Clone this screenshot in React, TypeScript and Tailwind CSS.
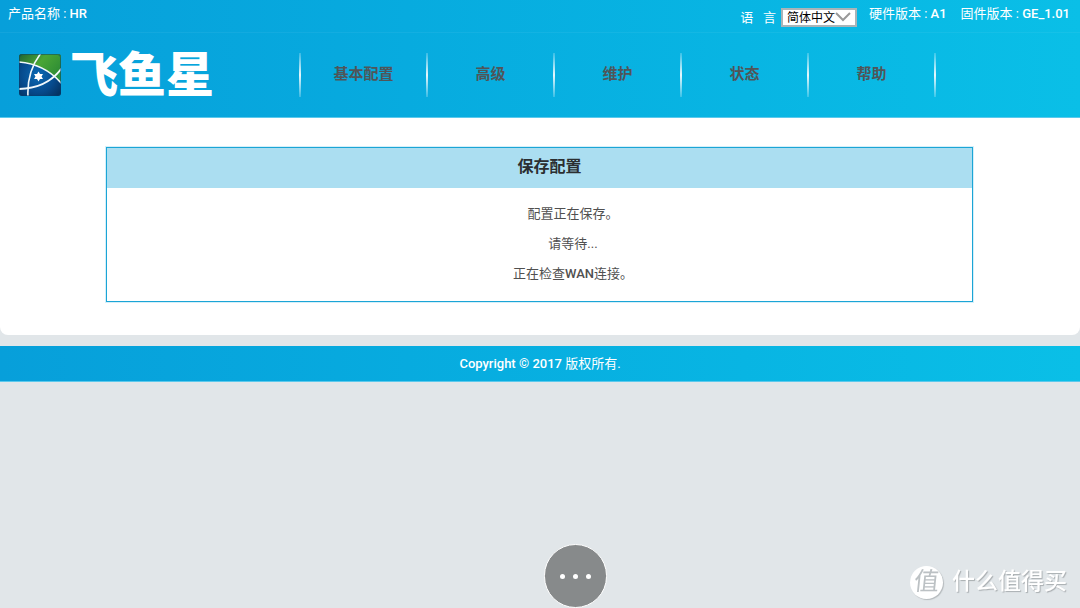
import { useState } from "react";

const menus = ["基本配置", "高级", "维护", "状态", "帮助"];

const Logo = () => {
  return (
    <a href="#home" className="flex items-center gap-2 pl-[18px] w-[299px] shrink-0">
      <svg viewBox="0 0 44 44" className="w-11 h-11 shrink-0" aria-hidden="true">
        <defs>
          <clipPath id="logoClip">
            <rect x="1" y="1" width="42" height="42" rx="3" />
          </clipPath>
          <linearGradient id="logoGreen" x1="0" y1="0" x2="1" y2="0.6">
            <stop offset="0" stopColor="#1c5f33" />
            <stop offset="0.5" stopColor="#4aa636" />
            <stop offset="1" stopColor="#2b8a35" />
          </linearGradient>
          <radialGradient id="logoBlue" cx="0.45" cy="0.5" r="0.65">
            <stop offset="0" stopColor="#0b6ab5" />
            <stop offset="0.6" stopColor="#064a8c" />
            <stop offset="1" stopColor="#05315f" />
          </radialGradient>
        </defs>
        <g clipPath="url(#logoClip)">
          <rect width="44" height="44" fill="url(#logoBlue)" />
          <path d="M0 9 C16 10 32 17 44 31 V0 H0 Z" fill="url(#logoGreen)" />
          <path d="M36 23 L44 15 V31 Z" fill="#2f9440" />
          <g fill="none" stroke="#f1f8fb">
            <path d="M0 9 C16 10 32 17 44 31" strokeWidth="1.6" />
            <path d="M0 36 C18 36 33 30 44 15" strokeWidth="1.8" />
            <path d="M23 0 C13 13 9 27 10 44" strokeWidth="1.6" />
          </g>
          <path
            d="M20.5 18.5 L22 21 L25 21 L23.5 23.5 L25 26 L22 26 L20.5 28.5 L19 26 L16 26 L17.5 23.5 L16 21 L19 21 Z"
            fill="#fff"
          />
        </g>
        <rect x="1.5" y="1.5" width="41" height="41" rx="3" fill="none" stroke="#06406d" strokeOpacity="0.5" />
      </svg>
      <span className="pt-0.5 text-[48px] leading-[44px] font-black text-white whitespace-nowrap">飞鱼星</span>
    </a>
  );
};

const Divider = () => {
  return <span className="w-0.5 h-11 shrink-0 bg-linear-to-b from-white/20 via-white/90 to-white/20" />;
};

const Header = () => {
  const [language, setLanguage] = useState("zh");

  return (
    <header className="bg-linear-to-r from-[#079fda] to-[#0abfe7] border-b border-[#5cc9ec]">
      <div className="flex justify-between h-8 pl-2 pr-[10px] text-[13px] leading-7 text-white whitespace-nowrap">
        <p>
          产品名称 : <span className="font-medium">HR</span>
        </p>
        <div className="flex">
          <label htmlFor="language" className="leading-9 whitespace-pre">
            语&nbsp;&nbsp; 言
          </label>
          <div className="relative ml-[5px] mt-2 h-[19px]">
            <select
              id="language"
              value={language}
              onChange={(e) => setLanguage(e.target.value)}
              className="appearance-none block w-[76px] h-[19px] pl-1 border-2 border-[#a9b4b8] bg-white text-xs leading-4 text-black"
            >
              <option value="zh">简体中文</option>
              <option value="en">English</option>
            </select>
            <svg viewBox="0 0 16 10" className="absolute right-1.5 top-1 w-4 h-[10px] pointer-events-none" aria-hidden="true">
              <path d="M1 1 L8 8 L15 1" fill="none" stroke="#999" strokeWidth="2" />
            </svg>
          </div>
          <p className="ml-3">
            硬件版本 : <span className="font-medium">A1</span>
          </p>
          <p className="ml-[14px]">
            固件版本 : <span className="font-medium">GE_1.01</span>
          </p>
        </div>
      </div>

      <div className="flex items-center h-[85px] border-t border-white/5">
        <Logo />
        <nav className="flex items-center">
          <Divider />
          {menus.map((menu) => (
            <div key={menu} className="flex items-center">
              <button type="button" className="w-[125px] pb-0.5 text-[15px] leading-6 font-bold text-[#505558] cursor-pointer">
                {menu}
              </button>
              <Divider />
            </div>
          ))}
        </nav>
      </div>
    </header>
  );
};

const SavePanel = () => {
  return (
    <section className="ml-[106px] mr-[107px] border border-[#1ba5d6] outline outline-[#d5eff9]">
      <h1 className="h-10 pl-5 bg-[#abdef1] text-center text-base leading-[38px] font-bold text-[#2b2f31]">保存配置</h1>
      <div className="flex flex-col items-center gap-[10px] pt-4 pb-[17px] pl-[67px] text-[13px] leading-5 text-[#505050]">
        <p>配置正在保存。</p>
        <p>请等待...</p>
        <p>
          正在检查<span className="font-medium">WAN</span>连接。
        </p>
      </div>
    </section>
  );
};

const Watermark = () => {
  return (
    <div className="fixed right-3 bottom-2 flex items-center gap-[9px] text-white">
      <span className="flex items-center justify-center w-[33px] h-[33px] rounded-full bg-white text-[#bcc1c4] text-[25px] leading-8 shadow-[1px_1px_1px_#b4b9bc]">
        <span className="-skew-x-6">值</span>
      </span>
      <span className="text-[23px] leading-9 font-medium pr-px text-shadow-[1px_1px_1px_#a9aeb1]">什么值得买</span>
    </div>
  );
};

const App = () => {
  return (
    <div className="min-h-screen bg-[#e1e6e9] font-['Roboto','Noto_Sans_CJK_SC',sans-serif]">
      <Header />
      <main className="bg-white rounded-b-lg pt-[29px] pb-[33px]">
        <SavePanel />
      </main>
      <footer className="mt-[11px] h-9 border-b border-[#5cc9ec] bg-linear-to-r from-[#079fda] to-[#0abfe7] text-center text-[13px] leading-9 text-white">
        <span className="font-medium">Copyright © 2017</span> 版权所有.
      </footer>

      <button
        type="button"
        aria-label="More"
        className="fixed left-1/2 bottom-0 ml-1 flex items-center justify-center gap-2 w-[63px] h-16 rounded-full border border-white bg-[#878a8b] cursor-pointer"
      >
        <span className="w-[5px] h-[5px] rounded-full bg-white" />
        <span className="w-[5px] h-[5px] rounded-full bg-white" />
        <span className="w-[5px] h-[5px] rounded-full bg-white" />
      </button>
      <Watermark />
    </div>
  );
};

export default App;
